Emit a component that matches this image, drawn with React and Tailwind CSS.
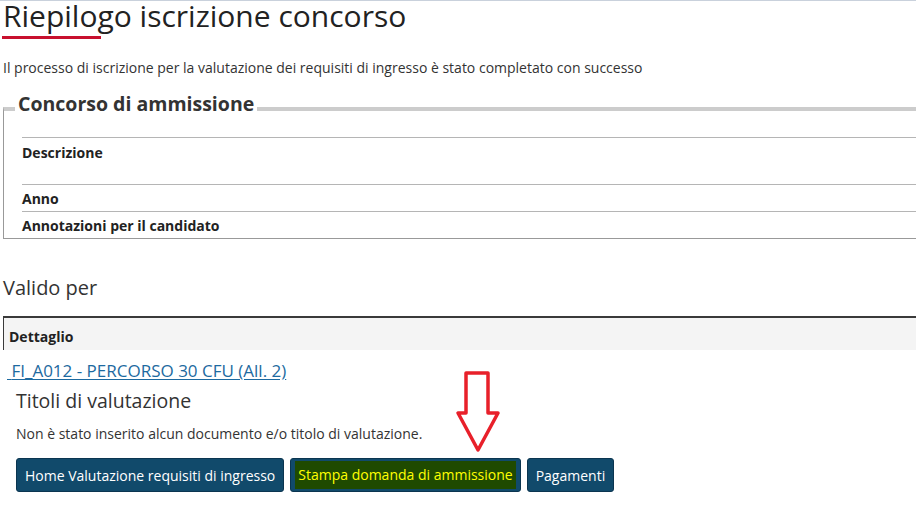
export default function App() {
  return (
    <div className="w-[916px] h-[507px] overflow-hidden bg-white text-[#333] border-t border-[#c9d1dc]" style={{ fontFamily: '"Open Sans", "Noto Sans", sans-serif' }}>
      <div className="pl-[3px]">
        <h1 className="text-[30px] leading-[30px] text-[#222] font-normal">Riepilogo iscrizione concorso</h1>
        <div className="mt-[5px] w-[99px] h-[3px] bg-[#c8102e] -ml-px"></div>
        <p className="mt-[19px] text-[14px] leading-[20px] text-[#333]">
          Il processo di iscrizione per la valutazione dei requisiti di ingresso è stato completato con successo
        </p>
        <fieldset className="mt-[19px] border-t-4 border-t-[#cccccc] border-l border-b border-l-[#999] border-b-[#999] border-r-0 p-0">
          <legend className="relative -top-[5px] ml-[11px] px-[3px] text-[19.5px] font-bold text-[#333] leading-[24px]">Concorso di ammissione</legend>
          <div className="mt-[16px] pl-[18px]">
            <div className="h-[47px] border-t border-[#b5b5b5] pt-[4px] text-[14px] font-bold text-[#222]">Descrizione</div>
            <div className="h-[27px] border-t border-[#b5b5b5] pt-[3px] text-[14px] font-bold text-[#222]">Anno</div>
            <div className="h-[27px] border-t border-[#b5b5b5] pt-[3px] text-[14px] font-bold text-[#222]">Annotazioni per il candidato</div>
          </div>
        </fieldset>
        <h2 className="mt-[35px] text-[20px] leading-[28px] text-[#333] font-normal">Valido per</h2>
        <div className="mt-[14px] border-t-2 border-[#3a3a3a] border-l bg-[#f4f4f4] h-[34px] pl-[5px] pt-[8px] text-[14px] font-bold text-[#222]">Dettaglio</div>
      </div>
      <div className="pl-[7px] mt-[9px]">
        <a href="#" className="text-[17px] leading-[22px] text-[#1d6aa0] underline underline-offset-2">{'\u00a0'}FI_A012 - PERCORSO 30 CFU (All. 2)</a>
      </div>
      <div className="pl-[16px]">
        <h3 className="mt-[5px] text-[19.5px] leading-[26px] text-[#333] font-normal">Titoli di valutazione</h3>
        <p className="mt-[11px] text-[14px] leading-[18px] text-[#333]">Non è stato inserito alcun documento e/o titolo di valutazione.</p>
        <div className="mt-[15px] flex gap-[6px] items-center">
          <button className="h-[34px] px-[8px] rounded-[3px] bg-[#114a6b] border border-[#0b3550] text-white text-[14px]">Home Valutazione requisiti di ingresso</button>
          <div className="relative">
            <button className="h-[34px] px-[4px] rounded-[3px] bg-[#114a6b] border border-[#0b3550] text-[14px] flex items-center">
              <span className="bg-[#1f4a00] text-[#ffff00] px-[3px] py-[4px] leading-[20px]">Stampa domanda di ammissione</span>
            </button>
            <svg className="absolute left-[165px] -top-[89px]" width="46" height="86" viewBox="0 0 46 86">
              <path d="M11 4 H33 V44 H43 L23 81 L3 44 H11 Z" fill="none" stroke="#e8202a" strokeWidth="3.5" strokeLinejoin="round" />
            </svg>
          </div>
          <button className="h-[34px] px-[8px] rounded-[3px] bg-[#114a6b] border border-[#0b3550] text-white text-[14px]">Pagamenti</button>
        </div>
      </div>
    </div>
  );
}
